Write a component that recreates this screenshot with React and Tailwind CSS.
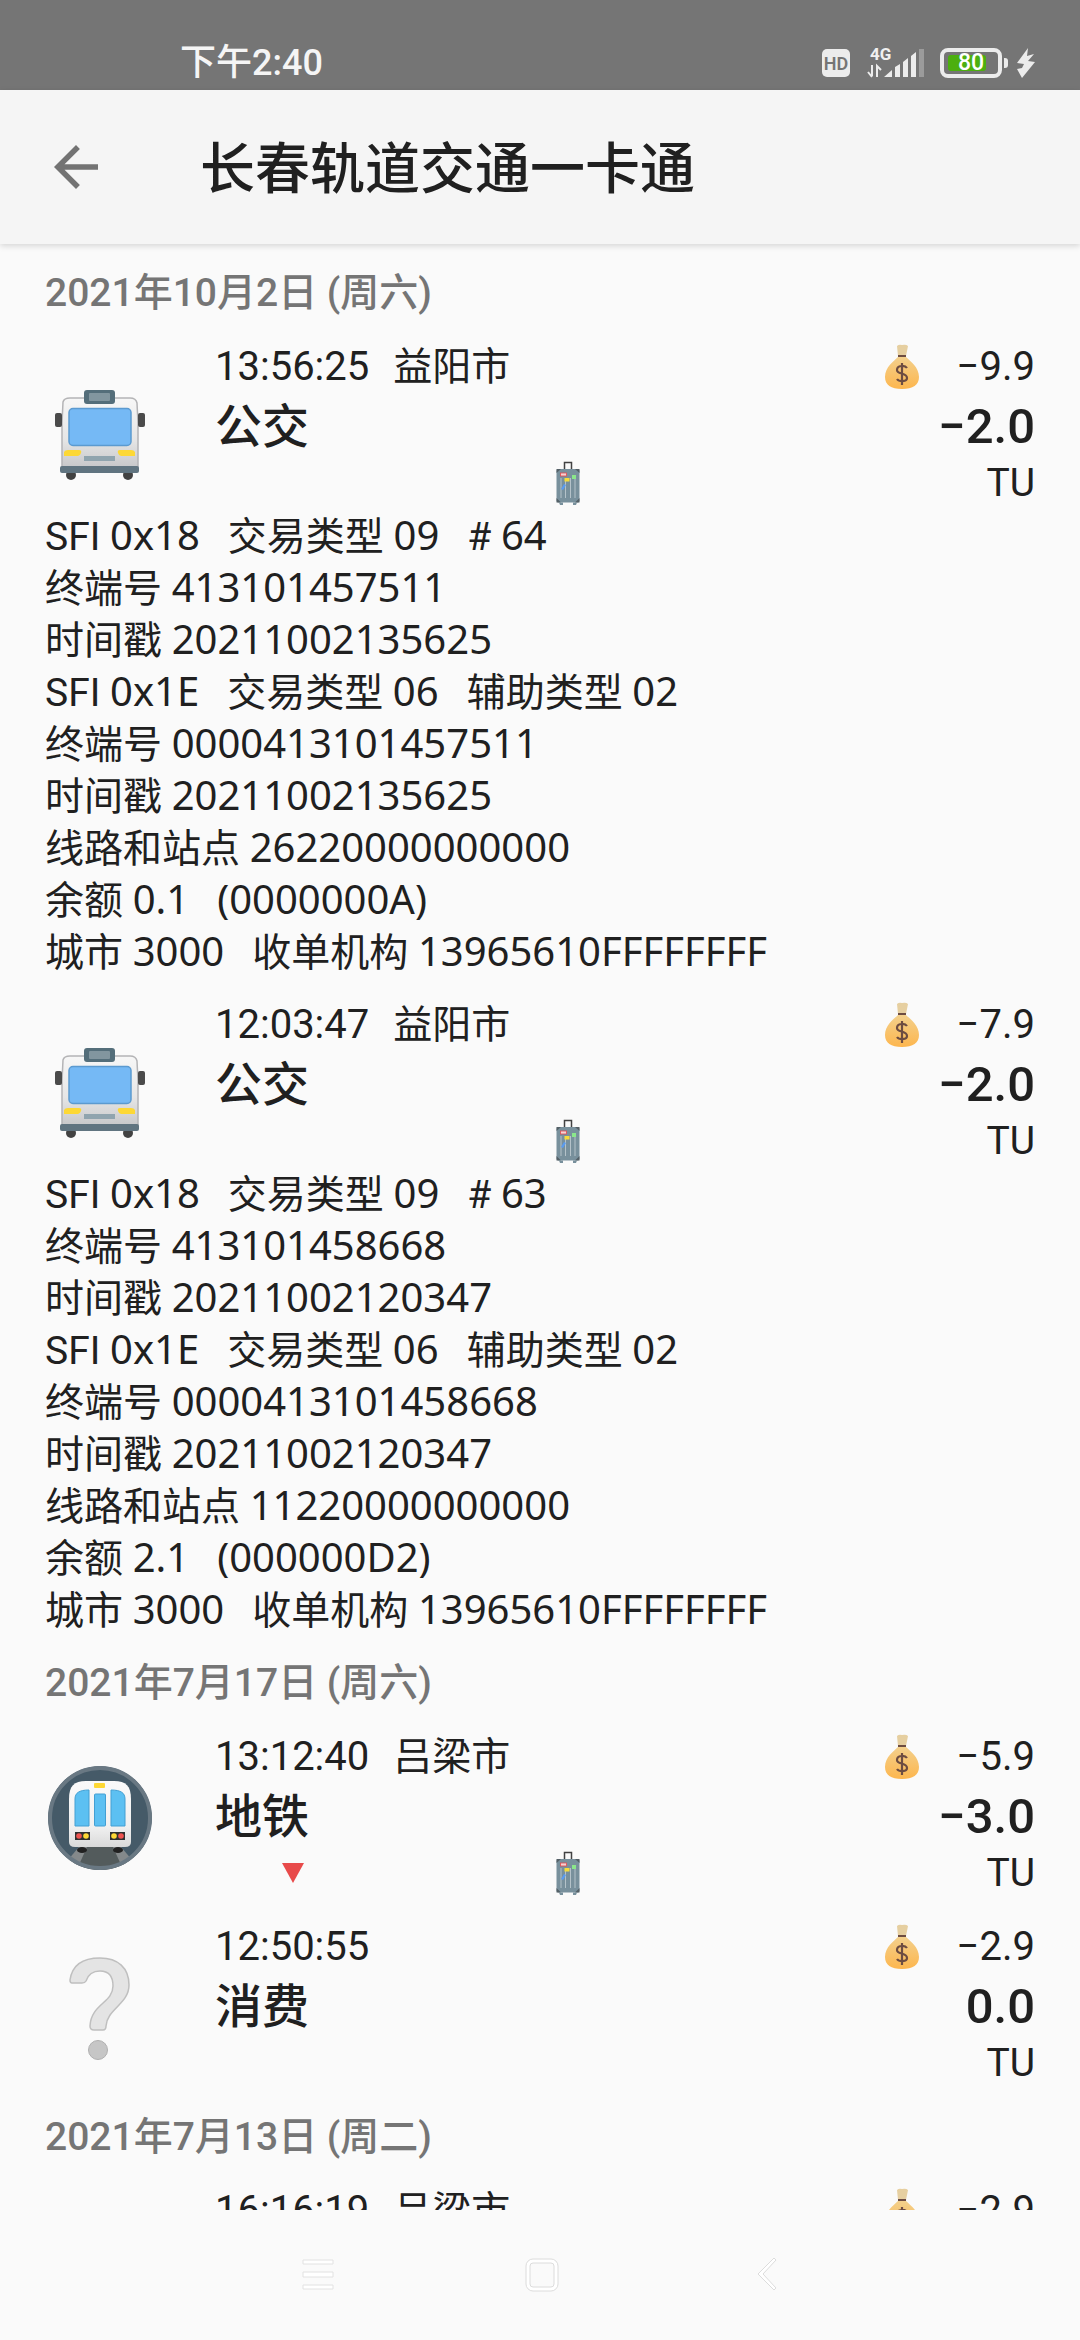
import React from 'react';

// Each detail line is a list of [label, value] pairs
const days = [
    {
        date: '2021年10月2日 (周六)',
        records: [
            {
                icon: 'bus', time: '13:56:25', city: '益阳市', name: '公交',
                balance: '−9.9', amount: '−2.0', trip: true,
                details: [
                    [['SFI', '0x18'], ['交易类型', '09'], ['#', '64']],
                    [['终端号', '413101457511']],
                    [['时间戳', '20211002135625']],
                    [['SFI', '0x1E'], ['交易类型', '06'], ['辅助类型', '02']],
                    [['终端号', '0000413101457511']],
                    [['时间戳', '20211002135625']],
                    [['线路和站点', '26220000000000']],
                    [['余额', '0.1'], ['', '(0000000A)']],
                    [['城市', '3000'], ['收单机构', '13965610FFFFFFFF']],
                ],
            },
            {
                icon: 'bus', time: '12:03:47', city: '益阳市', name: '公交',
                balance: '−7.9', amount: '−2.0', trip: true,
                details: [
                    [['SFI', '0x18'], ['交易类型', '09'], ['#', '63']],
                    [['终端号', '413101458668']],
                    [['时间戳', '20211002120347']],
                    [['SFI', '0x1E'], ['交易类型', '06'], ['辅助类型', '02']],
                    [['终端号', '0000413101458668']],
                    [['时间戳', '20211002120347']],
                    [['线路和站点', '11220000000000']],
                    [['余额', '2.1'], ['', '(000000D2)']],
                    [['城市', '3000'], ['收单机构', '13965610FFFFFFFF']],
                ],
            },
        ],
    },
    {
        date: '2021年7月17日 (周六)',
        records: [
            { icon: 'metro', time: '13:12:40', city: '吕梁市', name: '地铁', balance: '−5.9', amount: '−3.0', exit: true, trip: true },
            { icon: 'unknown', time: '12:50:55', city: '', name: '消费', balance: '−2.9', amount: '0.0' },
        ],
    },
    {
        date: '2021年7月13日 (周二)',
        records: [
            { icon: 'metro', time: '16:16:19', city: '吕梁市', name: '地铁', balance: '−2.9', amount: '−3.0', exit: true, trip: true },
        ],
    },
];

function BusIcon() {
    return (
        <svg viewBox="0 0 110 110" className="size-[110px]" aria-hidden="true">
            <defs>
                <linearGradient id="busBody" x1="0" y1="0" x2="0" y2="1">
                    <stop offset="0" stopColor="#f7f7f7" />
                    <stop offset="0.6" stopColor="#e6e6e6" />
                    <stop offset="1" stopColor="#c8c8ca" />
                </linearGradient>
            </defs>
            <circle cx="26" cy="102" r="5" fill="#424242" />
            <circle cx="83" cy="102" r="5" fill="#424242" />
            <path d="M17 94V50L18 29Q19 25 25 25H85Q91 25 92 30L93 50V94Z" fill="url(#busBody)" stroke="#b4b4b6" strokeWidth="1.5" />
            <rect x="10" y="40" width="7" height="14" rx="2" fill="#4a4a4a" />
            <rect x="93" y="40" width="7" height="14" rx="2" fill="#4a4a4a" />
            <rect x="39" y="17" width="31" height="14" rx="3" fill="#546e7a" />
            <rect x="44" y="20" width="21" height="8" rx="1" fill="#82969f" />
            <rect x="24" y="35.5" width="62" height="37" rx="4" fill="#75b9f5" stroke="#5b9ad0" strokeWidth="1.5" />
            <path d="M19 79Q20 77 23 77H34Q37 77 36 80Q35 83 33 83H19Z" fill="#fdd835" />
            <path d="M90 79Q89 77 86 77H75Q72 77 73 80Q74 83 76 83H90Z" fill="#fdd835" />
            <rect x="39" y="83" width="31" height="5" fill="#90a4ae" />
            <rect x="15" y="93" width="79" height="7" rx="2" fill="#607480" />
        </svg>
    );
}

function MetroIcon() {
    return (
        <svg viewBox="0 0 110 110" className="size-[110px]" aria-hidden="true">
            <defs>
                <clipPath id="tunnel"><circle cx="55" cy="55" r="52" /></clipPath>
                <linearGradient id="metroBody" x1="0" y1="0" x2="0" y2="1">
                    <stop offset="0" stopColor="#fafafa" />
                    <stop offset="0.7" stopColor="#f0f0f0" />
                    <stop offset="1" stopColor="#d9d9d9" />
                </linearGradient>
            </defs>
            <g clipPath="url(#tunnel)">
                <circle cx="55" cy="55" r="52" fill="#455a68" />
                <path d="M20 110L42 82H68L90 110Z" fill="#535b5c" />
                <path d="M22 98L34 84H42L33 104Z" fill="#84898b" />
                <path d="M88 98L76 84H68L77 104Z" fill="#84898b" />
            </g>
            <circle cx="55" cy="55" r="50" fill="none" stroke="#697883" strokeWidth="4" />
            <ellipse cx="37" cy="87" rx="5" ry="3" fill="#212121" />
            <ellipse cx="73" cy="87" rx="5" ry="3" fill="#212121" />
            <path d="M24 36C24 23 29 18 41 18H69C81 18 86 23 86 36V79Q86 84 80 84H30Q24 84 24 79Z" fill="url(#metroBody)" />
            <rect x="49" y="20" width="11" height="5" rx="1" fill="#fdd835" />
            <path d="M30 36C30 30 34 27 44 27V63H30Z" fill="#5cc0f2" stroke="#429fd3" strokeWidth="1" />
            <rect x="49.5" y="31" width="11" height="32" rx="1" fill="#5cc0f2" stroke="#429fd3" strokeWidth="1" />
            <path d="M80 36C80 30 76 27 66 27V63H80Z" fill="#5cc0f2" stroke="#429fd3" strokeWidth="1" />
            <rect x="30" y="69" width="15" height="8" fill="#303030" />
            <rect x="65" y="69" width="15" height="8" fill="#303030" />
            <circle cx="34" cy="73" r="2.8" fill="#ef5350" />
            <circle cx="41" cy="73" r="2.8" fill="#fdd835" />
            <circle cx="69" cy="73" r="2.8" fill="#fdd835" />
            <circle cx="76" cy="73" r="2.8" fill="#ef5350" />
        </svg>
    );
}

function UnknownIcon() {
    return (
        <svg viewBox="0 0 110 110" className="size-[110px]" aria-hidden="true">
            <path
                d="M27 30Q25 30 25 27C27 13 37 5 55 5C73 5 84 15 84 32C84 51 62 56 61 73Q61 77 58 77H49Q45 77 45 73C46 51 68 50 68 33C68 24 64 18 55 18C47 18 43 22 41 28Q40 30 37 30Z"
                fill="#e4e4e4" stroke="#bfbfbf" strokeWidth="1.5"
            />
            <circle cx="53" cy="97" r="9.5" fill="#c6c6c6" stroke="#b0b0b0" strokeWidth="1" />
        </svg>
    );
}

function MoneyBag() {
    return (
        <svg viewBox="0 0 46 46" className="size-[46px]" aria-hidden="true">
            <defs>
                <linearGradient id="bag" x1="0" y1="0" x2="0" y2="1">
                    <stop offset="0" stopColor="#f3d08c" />
                    <stop offset="1" stopColor="#fdb64e" />
                </linearGradient>
            </defs>
            <path d="M18 2Q20 0 23 1Q27 0 29 2L27 12H19Z" fill="#e6cfa0" />
            <path d="M19 13C15 17 6 23 6 33C6 41 12 45 23 45C34 45 40 41 40 33C40 23 31 17 27 13Z" fill="url(#bag)" />
            <rect x="19" y="11" width="8" height="2" fill="#6d4c41" />
            <path d="M28 24C26 21 18 21 18 26C18 31 28 28 28 34C28 38 20 38 18 35M23 19V41" fill="none" stroke="#6d4c41" strokeWidth="2.2" />
        </svg>
    );
}

function Luggage() {
    return (
        <svg viewBox="0 0 26 46" className="h-[46px] w-[26px]" aria-hidden="true">
            <path d="M9.5 10V2.5H16.5V10" fill="none" stroke="#424242" strokeWidth="1.5" />
            <rect x="1.5" y="9" width="23" height="33.5" rx="2" fill="#78909c" />
            <path d="M1.5 13V9H6ZM24.5 13V9H20ZM1.5 38V42.5H6ZM24.5 38V42.5H20Z" fill="#546067" />
            <path d="M6 18V38M10.5 18V38M15.5 18V38M20 18V38" stroke="#b4c2c9" strokeWidth="1" />
            <path d="M4 42.5H8V45H5ZM18 42.5H22L21 45H18Z" fill="#78909c" />
            <rect x="5.5" y="13" width="6" height="3" fill="#f4d3d3" stroke="#e5484d" strokeWidth="0.8" />
            <rect x="9.5" y="18" width="5" height="3.5" fill="#f7dc3a" />
            <rect x="17" y="15" width="4" height="4" fill="#8be78b" />
            <path d="M6 29L9 24L11 25L8 30Z" fill="#5b9cf0" />
        </svg>
    );
}

function ExitMark() {
    return (
        <svg viewBox="0 0 24 22" className="h-[22px] w-[24px]" aria-hidden="true">
            <path d="M1 1H23L12 21Z" fill="#e84a4a" />
        </svg>
    );
}

const icons = { bus: BusIcon, metro: MetroIcon, unknown: UnknownIcon };

function StatusBar() {
    return (
        <div className="flex h-[90px] shrink-0 items-center justify-between bg-[#757575] pt-[36px] pr-[44px] pl-[180px] text-[#f5f5f5]">
            <span className="text-[36px] leading-[40px] font-medium">下午2:40</span>
            <div className="flex items-center">
                <span className="flex h-[28px] w-[28px] items-center justify-center rounded-[5px] bg-[#ececec] text-[18px] font-semibold text-[#757575]">HD</span>
                <svg viewBox="0 0 58 34" className="mx-4 h-[34px] w-[58px]" aria-label="4G">
                    <text x="4" y="14" fontSize="17" fontWeight="700" fill="#f0f0f0">4G</text>
                    <path d="M6 19V30M2 26L6 31M11 31V20L15 24" fill="none" stroke="#ececec" strokeWidth="2" />
                    <path d="M18 31L26 24V31ZM29 21L34 18V31H29ZM37 16L42 12V31H37ZM45 10L50 6V31H45Z" fill="#ececec" />
                    <path d="M53 3H58V31H53Z" fill="#9b9b9b" />
                </svg>
                <div className="flex items-center">
                    <div className="relative flex h-[30px] w-[62px] items-center justify-center rounded-[8px] border-4 border-[#ececec]">
                        <span className="absolute inset-y-[3px] left-[4px] w-[38px] rounded-[3px] bg-[#4caf0f]" />
                        <span className="relative text-[23px] leading-[22px] font-medium text-white">80</span>
                    </div>
                    <span className="ml-[2px] h-[10px] w-[4px] rounded-r-[3px] bg-[#ececec]" />
                </div>
                <svg viewBox="0 0 20 30" className="ml-2 h-[30px] w-[20px]" aria-hidden="true">
                    <path d="M12 0L1 15L8 16L6 20L1 21L6 30L19 14L12 13L18 6L11 8Z" fill="#ececec" />
                </svg>
            </div>
        </div>
    );
}

function Record({ record }) {
    const Icon = icons[record.icon];

    return (
        <li className="pb-[21px] text-[39px]">
            <div className="flex">
                <div className="w-[170px] shrink-0 pt-[33px]"><Icon /></div>
                <div className="flex-1 pb-[3px]">
                    <div className="flex h-[54px] items-center justify-between">
                        <div className="flex items-baseline gap-6">
                            <time className="text-[40px]">{record.time}</time>
                            <span>{record.city}</span>
                        </div>
                        <div className="flex items-center gap-8 text-[40px]"><MoneyBag />{record.balance}</div>
                    </div>
                    <div className="flex h-[66px] items-center justify-between font-medium">
                        <h3 className="text-[47px]">{record.name}</h3>
                        <span className="text-[49px]">{record.amount}</span>
                    </div>
                    <div className="grid h-[46px] grid-cols-[19%_1fr_33%] items-center leading-[46px]">
                        <span className="flex justify-center">{record.exit && <ExitMark />}</span>
                        <span className="flex justify-center">{record.trip && <Luggage />}</span>
                        <span className="text-right">TU</span>
                    </div>
                </div>
            </div>
            {record.details && record.details.map((line, i) => (
                <p key={i} className="flex h-[52px] gap-7 leading-[52px]">
                    {line.map(([label, value]) => (
                        <span key={label} className="whitespace-pre">
                            {label && label + ' '}
                            <span className="font-['Noto_Sans',sans-serif] text-[40px]">{value}</span>
                        </span>
                    ))}
                </p>
            ))}
        </li>
    );
}

function NavBar() {
    return (
        <nav className="flex h-[130px] shrink-0 items-center justify-center gap-[190px] bg-[#fafafa] pl-1">
            <button aria-label="Menu">
                <svg viewBox="0 0 34 36" className="h-[36px] w-[34px]" fill="#fff" stroke="#e2e2e2" strokeWidth="1">
                    <path d="M2 3H32V7H2ZM2 15H32V20H2ZM2 28H32V32H2Z" />
                </svg>
            </button>
            <button aria-label="Home">
                <svg viewBox="0 0 34 36" className="h-[36px] w-[34px]" fill="#fff" stroke="#dcdcdc" strokeWidth="1">
                    <rect x="1" y="2" width="32" height="32" rx="7" />
                    <rect x="5" y="6" width="24" height="24" rx="3" fill="#fafafa" />
                </svg>
            </button>
            <button aria-label="Back">
                <svg viewBox="0 0 34 36" className="h-[36px] w-[34px]" fill="#fff" stroke="#dcdcdc" strokeWidth="1">
                    <path d="M25 1L9 17L25 33L27 31L14 17L27 3Z" />
                </svg>
            </button>
        </nav>
    );
}

export default function App() {
    return (
        <div className="flex h-screen flex-col bg-[#fafafa] font-[Roboto,'Noto_Sans_CJK_SC',sans-serif] text-[#202020]">
            <StatusBar />

            <header className="z-10 flex h-[154px] shrink-0 items-center bg-[#f5f5f5] pl-[43px] shadow-[0_2px_6px_rgba(0,0,0,0.15)]">
                <button aria-label="Back" className="text-[#737373]">
                    <svg viewBox="0 0 24 24" className="size-[66px]" fill="currentColor">
                        <path d="M20 11H7.83l5.59-5.59L12 4l-8 8 8 8 1.41-1.41L7.83 13H20z" />
                    </svg>
                </button>
                <h1 className="ml-[91px] pt-1 text-[55px] leading-[64px] font-medium">长春轨道交通一卡通</h1>
            </header>

            <main className="flex-1 overflow-hidden px-[45px] pt-[22px]">
                {days.map((day) => (
                    <section key={day.date}>
                        <h2 className="h-[74px] text-[39px] leading-[54px] font-medium text-[#757575]">{day.date}</h2>
                        <ul>
                            {day.records.map((record) => (
                                <Record key={record.time} record={record} />
                            ))}
                        </ul>
                    </section>
                ))}
            </main>

            <NavBar />
        </div>
    );
}
